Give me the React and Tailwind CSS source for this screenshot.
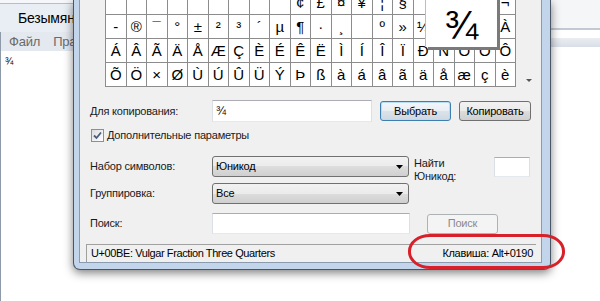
import React from 'react';

const ROW0 = ['', '', '', '', '', '', '', '', '', '¢', '£', '¤', '¥', '¦', '§', '¨', '', '', '', '¬'];
const ROW1 = ['-', '®', '¯', '°', '±', '²', '³', '´', 'µ', '¶', '·', '¸', '', 'º', '»', '¼', '', '', '', 'À'];
const ROW2 = 'ÁÂÃÄÅÆÇÈÉÊËÌÍÎÏÐÑÒÓÔ'.split('');
const ROW3 = 'ÕÖ×ØÙÚÛÜÝÞßàáâãäåæçè'.split('');
const CELLS = [...ROW0, ...ROW1, ...ROW2, ...ROW3];

function DropArrow() {
  return (
    <svg width="7" height="4" viewBox="0 0 7 4">
      <path d="M0 0 H7 L3.5 4 Z" fill="#000" />
    </svg>
  );
}

function Combo({ value }) {
  return (
    <div className="flex h-[21px] w-[197px] items-center justify-between rounded-[3px] border border-[#707070] bg-[linear-gradient(to_bottom,#f2f2f2_0%,#ebebeb_50%,#dddddd_50%,#cfcfcf_100%)] pl-[3px] pr-[5px] text-black">
      <span>{value}</span>
      <DropArrow />
    </div>
  );
}

function NotepadIcon() {
  return (
    <svg width="13" height="14" viewBox="0 0 13 14">
      <defs>
        <linearGradient id="np" x1="0" y1="0" x2="1" y2="1">
          <stop offset="0" stopColor="#cfeaf2" />
          <stop offset="1" stopColor="#5fa3bd" />
        </linearGradient>
      </defs>
      <rect x="0.5" y="0.5" width="12" height="13" rx="1" fill="url(#np)" stroke="#5a8799" />
      <path d="M3 4 H10 M3 7 H10 M3 10 H8" stroke="#ffffff" strokeOpacity="0.7" />
    </svg>
  );
}

export default function App() {
  return (
    <div className="relative flex h-[301px] w-[600px] overflow-hidden bg-white font-['Liberation_Sans',Arial,sans-serif] text-[11px] tracking-[-0.2px] text-[#1a1a1a]">
      {/* notepad behind, left part */}
      <div className="flex h-full w-[73px] shrink-0 flex-col overflow-hidden">
        <div className="h-[3px] bg-[#f4f6f9]" />
        <div className="flex h-[29px] items-center gap-[6px] border-t border-[#b4bfcc] bg-[#e9eef4] pl-[12px]">
          <NotepadIcon />
          <span className="whitespace-nowrap text-[14px] text-black">Безымянный - Блокнот</span>
        </div>
        <div className="flex flex-1">
          <div className="w-[10px] border-r border-[#8e9aa8] bg-[#dfe6ee]" />
          <div className="flex flex-1 flex-col">
            <div className="flex h-[19px] items-center gap-[13px] whitespace-nowrap bg-[#e4e8ef] pl-[8px] text-[13px] text-[#6a6a6a]">
              <span>Файл</span>
              <span>Правка</span>
            </div>
            <div className="flex-1 bg-white pl-[4px] pt-[3px] text-[10px] text-black">¾</div>
          </div>
        </div>
      </div>

      {/* character map dialog */}
      <div className="relative z-10 w-[478px] shrink-0">
        <div className="flex h-[270px] flex-col rounded-b-[7px] border-x border-b border-[#4a5666] bg-[#c2d5eb] pb-[7px] pl-[5px] pr-[8px] shadow-[0_3px_10px_rgba(0,0,0,0.5)]">
          <div className="flex flex-1 flex-col border-x border-b border-[#8a9bb0] bg-[#f0f0f0]">
            <div className="flex">
              <div className="relative ml-[25px] -mt-[9px] w-[411px]">
                <div className="grid auto-rows-[23px] grid-cols-[repeat(20,minmax(0,1fr))] gap-px bg-[#8c8c8c] px-px pb-px">
                  {CELLS.map((c, i) => (
                    <div key={i} className="flex items-center justify-center bg-white text-[15px] leading-none tracking-normal text-black">
                      {c}
                    </div>
                  ))}
                </div>
                <div className="absolute left-[320px] top-[-1px] flex h-[57px] w-[72px] items-end justify-center border-l border-[#bdbdbd] bg-white pb-[2px] text-[40px] leading-none tracking-normal text-black shadow-[3px_3px_0_#7a7a7a]">
                  ¾
                </div>
              </div>
              <div className="flex flex-1 flex-col items-center justify-end pb-[5px]">
                <svg width="6" height="3" viewBox="0 0 6 3">
                  <path d="M0 0 H6 L3 3 Z" fill="#555" />
                </svg>
              </div>
            </div>

            <div className="mt-[13px] flex flex-col pl-[10px]">
              <div className="flex h-[22px] items-center">
                <span className="w-[122px]">Для копирования:</span>
                <div className="flex h-[22px] w-[160px] items-center border border-x-[#dbdfe6] border-b-[#e3e9ef] border-t-[#abadb3] bg-white pl-[3px] text-[12px] text-black">
                  ¾
                </div>
                <button className="ml-[8px] h-[20px] w-[71px] rounded-[3px] border border-[#3c7fb1] bg-[linear-gradient(to_bottom,#f3f6f9_0%,#e9eef3_50%,#dbe3ea_50%,#cfd8e1_100%)] text-black shadow-[inset_0_0_0_1px_#b6ddf5]">
                  Выбрать
                </button>
                <button className="ml-[8px] h-[20px] w-[72px] rounded-[3px] border border-[#707070] bg-[linear-gradient(to_bottom,#f2f2f2_0%,#ebebeb_50%,#dddddd_50%,#cfcfcf_100%)] text-black">
                  Копировать
                </button>
              </div>

              <div className="mt-[7px] flex h-[13px] items-center pl-px">
                <div className="flex h-[13px] w-[13px] items-center justify-center border border-[#8e8f8f] bg-[linear-gradient(135deg,#dcdcdc,#ffffff)]">
                  <svg width="9" height="9" viewBox="0 0 9 9">
                    <path d="M1 4.5 L3.5 7 L8 1.5" stroke="#4a5c80" strokeWidth="1.8" fill="none" />
                  </svg>
                </div>
                <span className="ml-[3px]">Дополнительные параметры</span>
              </div>

              <div className="mt-[14px] flex h-[21px] items-start">
                <span className="flex h-[21px] w-[122px] items-center">Набор символов:</span>
                <Combo value="Юникод" />
                <span className="ml-[5px] w-[80px] pt-px leading-[13px]">
                  Найти
                  <br />
                  Юникод:
                </span>
                <div className="mt-px h-[20px] w-[36px] border border-x-[#dbdfe6] border-b-[#e3e9ef] border-t-[#abadb3] bg-white" />
              </div>

              <div className="mt-[6px] flex h-[21px] items-center">
                <span className="w-[122px]">Группировка:</span>
                <Combo value="Все" />
              </div>

              <div className="mt-[9px] flex h-[21px] items-center">
                <span className="w-[122px]">Поиск:</span>
                <div className="h-[21px] w-[198px] border border-x-[#dbdfe6] border-b-[#e3e9ef] border-t-[#abadb3] bg-white" />
                <button className="ml-[17px] h-[20px] w-[71px] rounded-[3px] border border-[#adb2b5] bg-[#f4f4f4] text-[#8a8a8a]">
                  Поиск
                </button>
              </div>
            </div>

            <div className="ml-[6px] mt-[10px] flex h-[18px] w-[450px] items-center justify-between border-l border-t border-[#a0a0a0] pl-[4px] pr-[3px] text-black">
              <span className="tracking-[-0.4px]">U+00BE: Vulgar Fraction Three Quarters</span>
              <span className="tracking-[-0.3px]">Клавиша: Alt+0190</span>
            </div>
          </div>
        </div>
      </div>

      {/* window behind, right part */}
      <div className="flex flex-1 flex-col bg-white">
        <div className="h-[28px] bg-[#f5f6f8]" />
        <div className="h-[2px] bg-[#c3c9d2]" />
        <div className="h-[8px]" />
        <div className="h-[9px] bg-[linear-gradient(to_bottom,#eaedf2,#d9dfe7)]" />
        <div className="flex-1" />
      </div>

      {/* red marker around the key */}
      <div className="absolute left-[408px] top-[234px] z-20 h-[35px] w-[157px] rounded-[22px/17px] border-[3px] border-[#d8202a]" />
    </div>
  );
}
